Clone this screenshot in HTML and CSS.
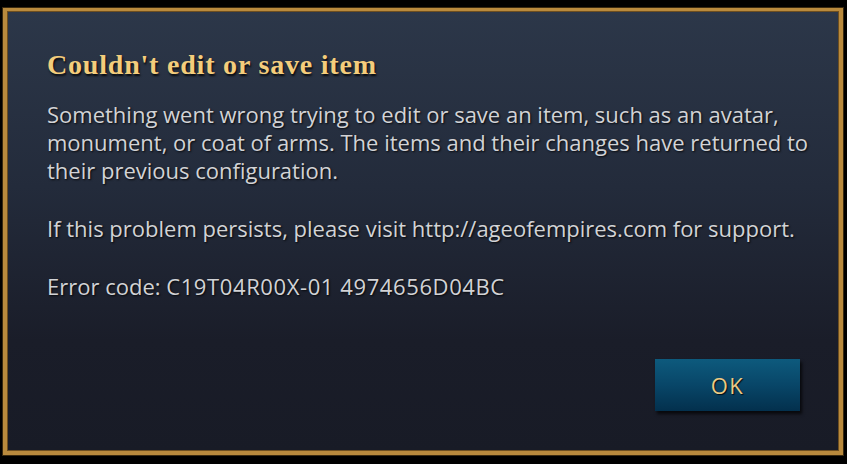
FILE: index.html
```html
<!DOCTYPE html>
<html lang="en">
  <head>
    <meta charset="utf-8">
    <title>Couldn't edit or save item</title>
    <link rel="stylesheet" href="styles.css">
  </head>
  <body>
    <div class="dialog">
      <h1 class="dialog-title">Couldn't edit or save item</h1>
      <div class="dialog-body">
        <p>Something went wrong trying to edit or save an item, such as an avatar, monument, or coat of arms. The items and their changes have returned to their previous configuration.</p>
        <p>If this problem persists, please visit http://ageofempires.com for support.</p>
        <p>Error code: <span class="error-code">C19T04R00X-01 4974656D04BC</span></p>
      </div>
      <div class="dialog-actions">
        <a href="#" class="btn-ok">OK</a>
      </div>
    </div>
  </body>
</html>
```

FILE: styles.css
```css
* {
  box-sizing: border-box
}

html, body {
  height: 100%;
}

body {
  margin: 0;
  padding: 8px 4px 9px 3px;
  background-color: #000;
  font-family: 'Open Sans', sans-serif;
  overflow: hidden;
}

.dialog {
  height: 100%;
  display: flex;
  flex-direction: column;
  border: 4px solid #b98a3d;
  border-top-width: 3px;
  box-shadow: inset 0 0 0 1px #6e4f20, 0 0 0 1px #3a2a10;
  background: linear-gradient(to bottom, #2c3749 0%, #232b3b 40%, #1a1d29 75%, #181b26 100%);
  padding: 39px 30px 40px 40px;
}

.dialog-title {
  margin: 0;
  font-family: 'Liberation Serif', serif;
  font-weight: 700;
  font-size: 28px;
  letter-spacing: 0.8px;
  line-height: 30px;
  color: #f4cd7c;
  text-shadow: 1px 2px 2px rgba(0, 0, 0, 0.8);
}

.dialog-body {
  margin-top: 20px;
  font-size: 22px;
  line-height: 28px;
  color: #d2d3d6;
  text-shadow: 1px 1px 2px rgba(0, 0, 0, 0.8);
}

.dialog-body p {
  margin: 0 0 30px;
}

.error-code {
  letter-spacing: 0.6px;
}

.dialog-actions {
  margin-top: auto;
  display: flex;
  justify-content: flex-end;
  padding-right: 9px;
}

.btn-ok {
  width: 145px;
  height: 52px;
  display: flex;
  align-items: center;
  justify-content: center;
  background: linear-gradient(to bottom, #0d5a7d 0%, #084668 50%, #03304d 100%);
  box-shadow: 2px 3px 3px rgba(0, 0, 0, 0.7);
  color: #ecca84;
  font-size: 22px;
  letter-spacing: 1.5px;
  text-decoration: none;
  text-shadow: 1px 1px 1px rgba(0, 0, 0, 0.8);
}
```
